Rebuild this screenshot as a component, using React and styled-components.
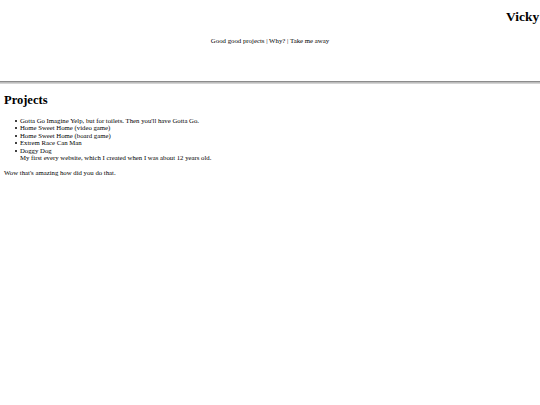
import React from "react";
import styled, { createGlobalStyle } from "styled-components";

const Global = createGlobalStyle`
  html, body { margin: 0; padding: 0; background: #fff; overflow: hidden; }
  body { font-family: "Liberation Serif", "Times New Roman", serif; color: #000; }
`;

const Header = styled.header`
  display: flex;
  flex-direction: column;
  align-items: stretch;
`;

const Title = styled.h1`
  margin: 9px 0 0 0;
  padding-left: 506px;
  font-size: 13.5px;
  line-height: 15px;
  font-weight: bold;
  white-space: nowrap;
`;

const Nav = styled.nav`
  margin-top: 13px;
  text-align: center;
  font-size: 6.8px;
  line-height: 7.5px;
`;

const NavLink = styled.a`
  color: #000;
  text-decoration: none;
`;

const Rule = styled.hr`
  margin: 36px 0 0 0;
  height: 1px;
  border: none;
  border-top: 1px solid #8c8c8c;
  border-bottom: 1px solid #d4d4d4;
  background: #bdbdbd;
`;

const Main = styled.main`
  padding: 0 4px;
`;

const Heading = styled.h2`
  margin: 9px 0 0 0;
  font-size: 12.5px;
  line-height: 14px;
  font-weight: bold;
`;

const List = styled.ul`
  margin: 10px 0 0 0;
  padding-left: 16px;
  list-style: none;
  font-size: 6.75px;
  line-height: 7.5px;
`;

const Item = styled.li`
  position: relative;
  &::before {
    content: "";
    position: absolute;
    left: -5.5px;
    top: 3px;
    width: 2.2px;
    height: 2.2px;
    border-radius: 50%;
    background: #000;
  }
`;

const Note = styled.p`
  margin: 7px 0 0 0;
  font-size: 6.75px;
  line-height: 7.5px;
`;

export default function App() {
  return (
    <>
      <Global />
      <Header>
        <Title>Vicky Lai</Title>
        <Nav>
          <NavLink href="#">Good good projects</NavLink> |{" "}
          <NavLink href="#">Why?</NavLink> |{" "}
          <NavLink href="#">Take me away</NavLink>
        </Nav>
      </Header>
      <Rule />
      <Main>
        <Heading>Projects</Heading>
        <List>
          <Item>Gotta Go Imagine Yelp, but for toilets. Then you'll have Gotta Go.</Item>
          <Item>Home Sweet Home (video game)</Item>
          <Item>Home Sweet Home (board game)</Item>
          <Item>Extrem Race Can Man</Item>
          <Item>
            Doggy Dog
            <br />
            My first every website, which I created when I was about 12 years old.
          </Item>
        </List>
        <Note>Wow that's amazing how did you do that.</Note>
      </Main>
    </>
  );
}
